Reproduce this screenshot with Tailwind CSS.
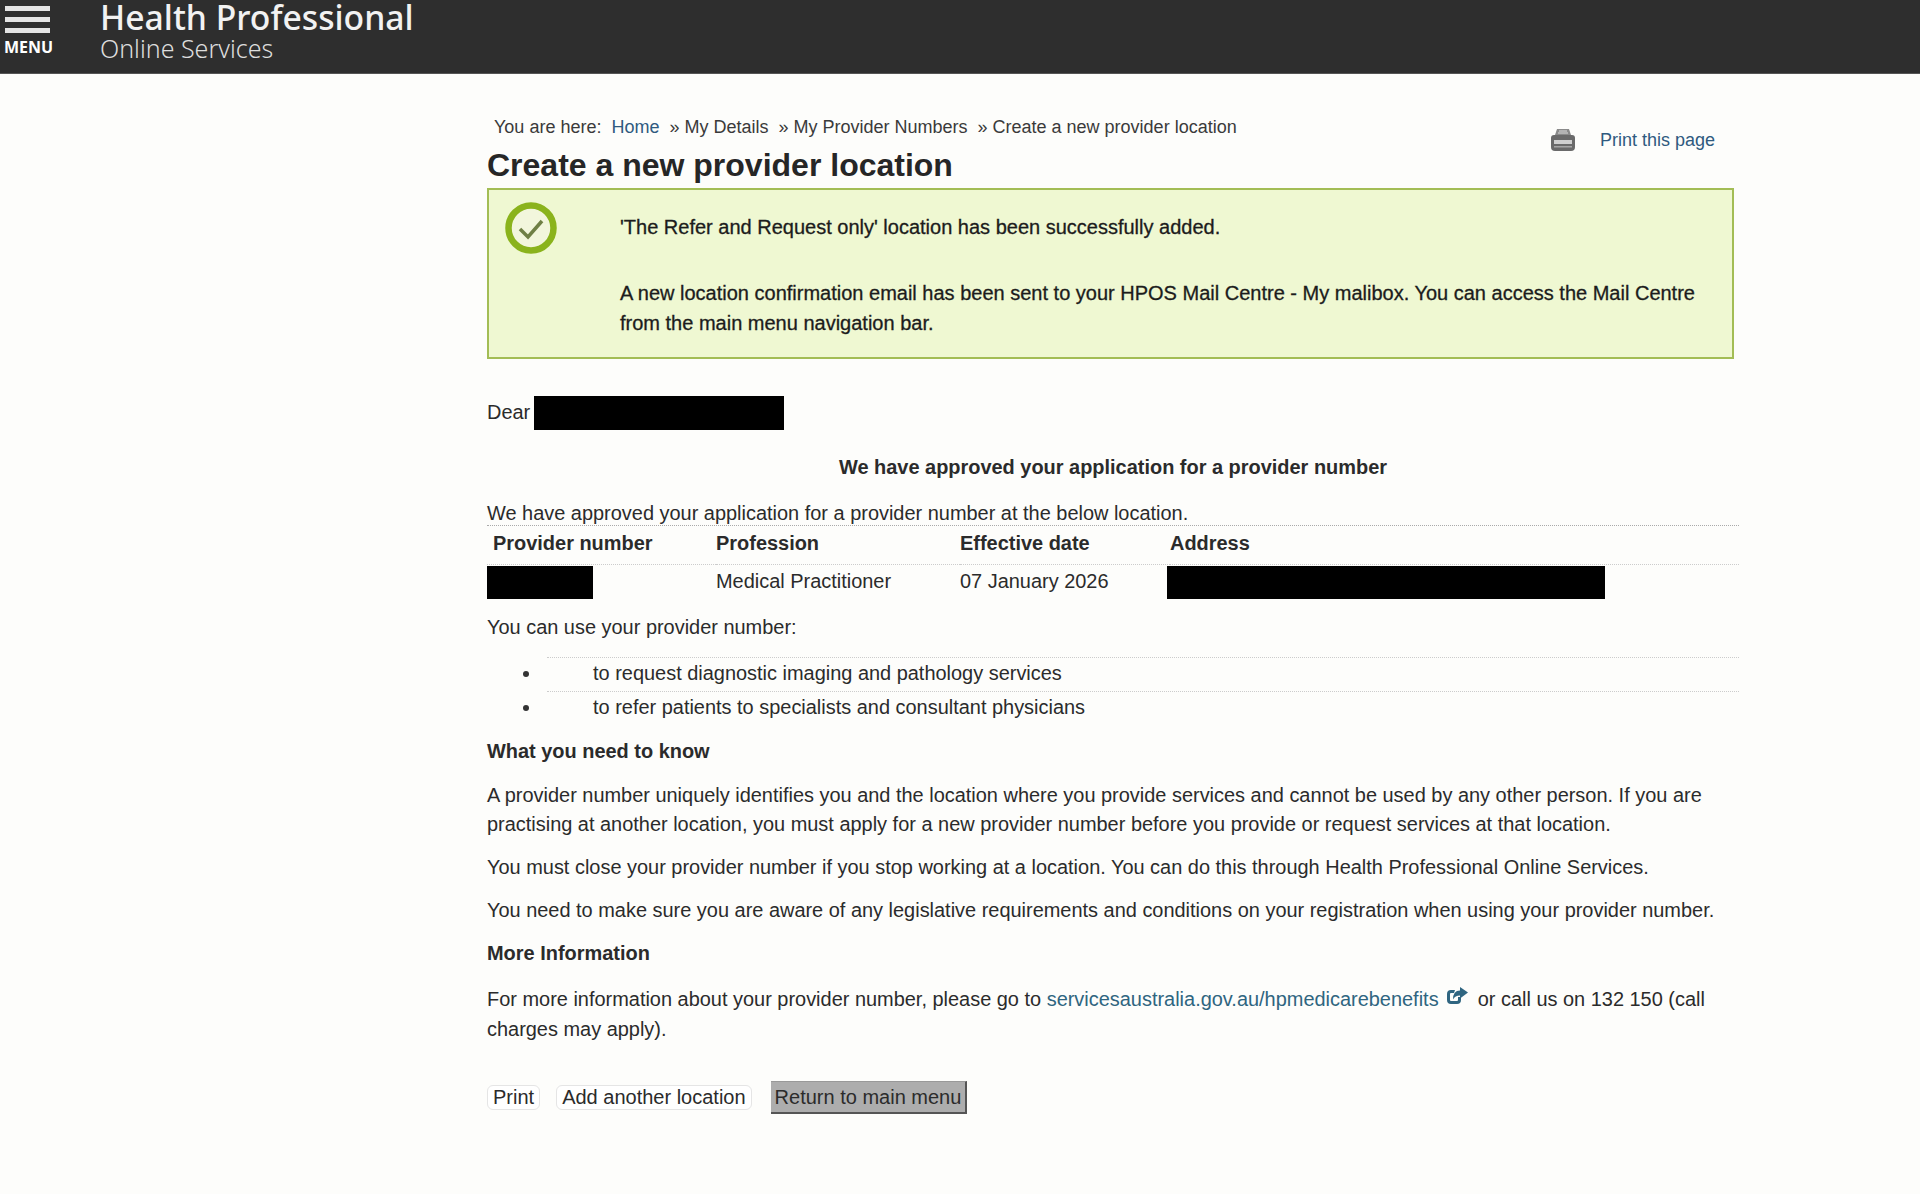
<!DOCTYPE html>
<html lang="en"><head><meta charset="utf-8"><title>Create a new provider location</title>
<script src="https://cdn.jsdelivr.net/npm/@tailwindcss/browser@4"></script></head>
<body class="bg-[#fdfdfb] font-['Liberation_Sans',Arial,sans-serif] text-[#2b2b2b] text-[19.96px] overflow-hidden h-[1194px]">
<header class="h-[74px] bg-[#2e2e2e] border-b border-[#555] flex items-start overflow-hidden">
  <div class="w-[100px] shrink-0 pl-[5px] pt-[6px] flex flex-col">
    <div class="w-[45px] flex flex-col gap-[6px]">
      <span class="block h-[5px] bg-[#e4e4e4]"></span><span class="block h-[5px] bg-[#e4e4e4]"></span><span class="block h-[5px] bg-[#e4e4e4]"></span>
    </div>
    <span class="text-white font-bold text-[16px] leading-[18px] mt-[5px] -ml-[1px] font-['Open_Sans',sans-serif]">MENU</span>
  </div>
  <div class="font-['Noto_Sans',sans-serif] text-[#f2f2f2]">
    <div class="text-[33.7px] leading-[34px] font-medium">Health Professional</div>
    <div class="text-[25px] leading-[30px] font-light text-[#ddd] -mt-[1px]">Online Services</div>
  </div>
</header>
<main class="ml-[487px] w-[1252px]">
  <div class="flex justify-between items-start">
    <div>
      <nav class="ml-[7px] mt-[42px] text-[18px] leading-[22px] text-[#3a3a3a] whitespace-pre">You are here:  <a class="text-[#2f5a7f]">Home</a>  » My Details  » My Provider Numbers  » Create a new provider location</nav>
      <h1 class="mt-[9px] text-[32px] leading-[36px] font-bold text-[#262626]">Create a new provider location</h1>
    </div>
    <a class="mt-[54px] mr-[24px] flex items-center gap-[23px] text-[18px] leading-[22px] text-[#2f5a7f]">
      <svg class="w-[28px] h-[24px]" viewBox="0 0 28 24"><path d="M8 1h12l2 6H6z" fill="#8a8a8a"/><path d="M10 3h8M9 5h10" stroke="#ddd" stroke-width="1"/><path d="M2 10q0-3 3-3h18q3 0 3 3v9q0 4-4 4H6q-4 0-4-4z" fill="#6a6a6a"/><rect x="5" y="12" width="18" height="4" fill="#cfcfcf"/><rect x="5" y="18" width="18" height="1.5" fill="#a5a5a5"/></svg>
      Print this page
    </a>
  </div>
  <section class="w-[1247px] h-[171px] mt-[5px] border-2 border-[#a3bd55] bg-[#eff8d2] flex text-[#1c1c1c] text-[20px] [-webkit-text-stroke:0.3px]">
    <div class="w-[131px] shrink-0 pl-[15px] pt-[12px]">
      <svg class="w-[54px] h-[54px]" viewBox="0 0 54 54"><circle cx="27" cy="26" r="22.5" fill="#f2f6dc" stroke="#8ab31c" stroke-width="6.5"/><path d="M16 27l8 8 14-16" fill="none" stroke="#6f7f45" stroke-width="3.5"/></svg>
    </div>
    <div class="pt-[22px] leading-[30px] pr-[30px]">
      <p>'The Refer and Request only' location has been successfully added.</p>
      <p class="mt-[36px]">A new location confirmation email has been sent to your HPOS Mail Centre - My malibox. You can access the Mail Centre from the main menu navigation bar.</p>
    </div>
  </section>
  <div class="mt-[36px] flex items-center h-[35px] gap-[4px]">Dear <span class="block w-[250px] h-[34px] bg-black"></span></div>
  <h2 class="mt-[22px] font-bold leading-[30px] text-center w-[1252px]">We have approved your application for a provider number</h2>
  <p class="mt-[16px] leading-[30px] border-b border-dotted border-[#aaa] h-[28px]">We have approved your application for a provider number at the below location.</p>
  <table class="w-full border-collapse table-fixed">
    <tbody>
      <tr class="h-[38px] border-b border-dotted border-[#ccc] font-bold text-left">
        <th class="w-[229px] pl-[6px] pb-[1px]">Provider number</th><th class="w-[244px] pb-[1px]">Profession</th><th class="w-[210px] pb-[1px]">Effective date</th><th class="pb-[1px]">Address</th>
      </tr>
      <tr class="h-[37px]">
        <td><span class="block w-[106px] h-[33px] bg-black"></span></td><td class="pb-[2px]">Medical Practitioner</td><td class="pb-[2px]">07 January 2026</td>
        <td><span class="block w-[438px] h-[33px] -ml-[3px] bg-black"></span></td>
      </tr>
    </tbody>
  </table>
  <p class="mt-[11px] leading-[30px]">You can use your provider number:</p>
  <ul class="ml-[60px] mt-[15px] list-none">
    <li class="relative h-[34px] leading-[30px] border-t border-dotted border-[#ccc] pl-[46px]"><span class="absolute -left-[24px] top-[13px] w-[6px] h-[6px] rounded-full bg-[#333]"></span>to request diagnostic imaging and pathology services</li>
    <li class="relative h-[34px] leading-[30px] border-t border-dotted border-[#ccc] pl-[46px]"><span class="absolute -left-[24px] top-[13px] w-[6px] h-[6px] rounded-full bg-[#333]"></span>to refer patients to specialists and consultant physicians</li>
  </ul>
  <h3 class="mt-[11px] font-bold leading-[30px]">What you need to know</h3>
  <p class="mt-[15px] leading-[29px]">A provider number uniquely identifies you and the location where you provide services and cannot be used by any other person. If you are practising at another location, you must apply for a new provider number before you provide or request services at that location.</p>
  <p class="mt-[13px] leading-[30px]">You must close your provider number if you stop working at a location. You can do this through Health Professional Online Services.</p>
  <p class="mt-[13px] leading-[30px]">You need to make sure you are aware of any legislative requirements and conditions on your registration when using your provider number.</p>
  <h3 class="mt-[13px] font-bold leading-[30px]">More Information</h3>
  <p class="mt-[17px] leading-[29.5px]">For more information about your provider number, please go to <a class="text-[#2f6580]">servicesaustralia.gov.au/hpmedicarebenefits</a>
    <svg class="inline-block w-[22px] h-[18px] ml-[2px] mr-[4px] align-[1px]" viewBox="0 0 22 18"><path d="M9 3H5Q1 3 1 7v6q0 4 4 4h6q4 0 4-4v-3h-3v3q0 1-1 1H5q-1 0-1-1V7q0-1 1-1h3z" fill="#2f6580"/><path d="M14 0l8 5.500-8 6V8.500q-5 0-7 4 0-9 7-9z" fill="#2f6580"/></svg>
    or call us on 132 150 (call charges may apply).</p>
  <div class="mt-[37px] flex items-center gap-[16px]">
    <button class="h-[25px] px-[5px] rounded-md bg-white border border-[#e5e5e5] text-[20px] leading-[23px]">Print</button>
    <button class="h-[25px] px-[5px] rounded-md bg-white border border-[#e5e5e5] text-[20px] leading-[23px]">Add another location</button>
    <button class="h-[33px] ml-[3px] px-[4px] bg-[#adadad] border-r-2 border-b-2 border-t border-[#555] border-t-[#999] text-[20px] leading-[28px]">Return to main menu</button>
  </div>
</main>
</body></html>
